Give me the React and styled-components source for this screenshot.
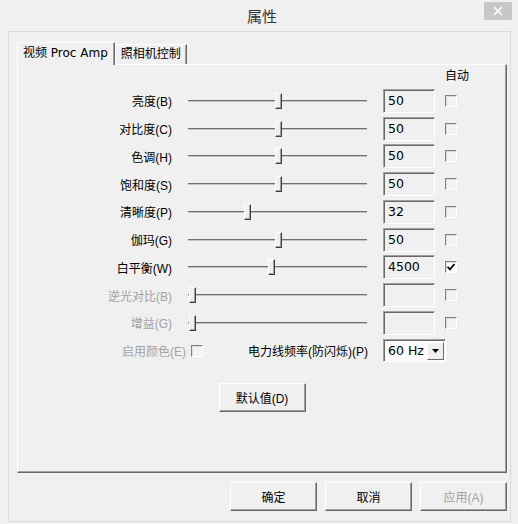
import React from "react";
import styled, { createGlobalStyle } from "styled-components";

const GlobalStyle = createGlobalStyle`
  body {
    margin: 0;
    background: #f0f0f0;
    font-family: "Liberation Sans", "Noto Sans CJK SC", sans-serif;
    font-size: 12px;
    color: #000;
  }
`;

const rows = [
  { label: "亮度(B)", value: "50", pos: 87 },
  { label: "对比度(C)", value: "50", pos: 87 },
  { label: "色调(H)", value: "50", pos: 87 },
  { label: "饱和度(S)", value: "50", pos: 87 },
  { label: "清晰度(P)", value: "32", pos: 56 },
  { label: "伽玛(G)", value: "50", pos: 87 },
  { label: "白平衡(W)", value: "4500", pos: 80, checked: true },
  { label: "逆光对比(B)", value: "", pos: 1, disabled: true },
  { label: "增益(G)", value: "", pos: 1, disabled: true },
];

function App() {
  return (
    <>
      <GlobalStyle />
      <Window>
        <TitleBar>
          <span />
          <Title>属性</Title>
          <CloseButton>
            <svg width="10" height="10" viewBox="0 0 10 10">
              <path d="M1 1 L9 9 M9 1 L1 9" stroke="#fff" strokeWidth="1.6" />
            </svg>
          </CloseButton>
        </TitleBar>
        <Client>
          <TabStrip>
            <Tab $active>视频 Proc Amp</Tab>
            <Tab>照相机控制</Tab>
          </TabStrip>
          <Panel>
            <Grid>
              <AutoHeader>自动</AutoHeader>
              {rows.map((r, i) => (
                <React.Fragment key={i}>
                  <Label $disabled={r.disabled}>{r.label}</Label>
                  <Track>
                    <Thumb style={{ left: r.pos }} />
                  </Track>
                  <TextBox>{r.value}</TextBox>
                  <CheckBox $checked={r.checked}>
                    {r.checked && (
                      <svg width="8" height="8" viewBox="0 0 8 8">
                        <path d="M0.5 3.8 L3 6.3 L7.5 1" stroke="#000" strokeWidth="1.8" fill="none" />
                      </svg>
                    )}
                  </CheckBox>
                </React.Fragment>
              ))}
              <LastRow>
                <InlineLabel>启用颜色(E)</InlineLabel>
                <CheckBox />
                <PowerLabel>电力线频率(防闪烁)(P)</PowerLabel>
              </LastRow>
              <Combo>
                <ComboText>60 Hz</ComboText>
                <ComboArrow>
                  <svg width="7" height="4" viewBox="0 0 7 4">
                    <path d="M0 0 L7 0 L3.5 4 Z" fill="#000" />
                  </svg>
                </ComboArrow>
              </Combo>
            </Grid>
            <CenterRow>
              <Button>默认值(D)</Button>
            </CenterRow>
          </Panel>
          <Footer>
            <Button>确定</Button>
            <Button>取消</Button>
            <Button $disabled>应用(A)</Button>
          </Footer>
        </Client>
      </Window>
    </>
  );
}

const Window = styled.div`
  width: 518px;
  height: 524px;
  display: flex;
  flex-direction: column;
  background: #f0f0f0;
  box-sizing: border-box;
`;

const TitleBar = styled.div`
  height: 31px;
  flex: none;
  display: grid;
  grid-template-columns: 1fr auto 1fr;
  align-items: center;
`;

const Title = styled.div`
  font-family: "Noto Sans CJK SC", sans-serif;
  font-size: 15px;
  color: #333;
  padding-left: 6px;
  margin-top: -1px;
`;

const CloseButton = styled.div`
  justify-self: end;
  align-self: start;
  margin: 2px 6px 0 0;
  width: 28px;
  height: 18px;
  background: #c7c7c7;
  display: flex;
  align-items: center;
  justify-content: center;
`;

const Client = styled.div`
  flex: 1;
  margin: 0 7px 2px 8px;
  border: 1px solid #dadada;
  padding: 10px 3px 0 8px;
  display: flex;
  flex-direction: column;
`;

const TabStrip = styled.div`
  display: flex;
  align-items: flex-end;
  height: 22px;
  flex: none;
`;

const Tab = styled.div`
  position: relative;
  z-index: 1;
  box-sizing: border-box;
  height: ${(p) => (p.$active ? "23px" : "20px")};
  margin-bottom: ${(p) => (p.$active ? "-1px" : "0")};
  padding: ${(p) => (p.$active ? "2px 6px 0 5px" : "1px 5px 0 5px")};
  background: #f0f0f0;
  border-top: 1px solid #fff;
  border-left: 1px solid #fff;
  border-right: 1px solid #696969;
  box-shadow: inset -1px 0 #a0a0a0;
  font-family: "DejaVu Sans", "Noto Sans CJK SC", sans-serif;
  font-size: 12px;
  line-height: 17px;
  white-space: nowrap;
`;

const Panel = styled.div`
  height: 409px;
  flex: none;
  box-sizing: border-box;
  border-top: 1px solid #fff;
  border-left: 1px solid #fff;
  border-right: 1px solid #696969;
  border-bottom: 1px solid #696969;
  box-shadow: inset -1px -1px #a0a0a0;
  display: flex;
  flex-direction: column;
`;

const Grid = styled.div`
  display: grid;
  grid-template-columns: 159px 195px 62px 12px;
  grid-template-rows: 18px;
  grid-auto-rows: 24px;
  row-gap: 3.75px;
  padding: 2px 0 0 11px;
  align-items: center;
  justify-items: start;
`;

const AutoHeader = styled.div`
  grid-column: 4;
  align-self: start;
  white-space: nowrap;
  line-height: 16px;
  font-family: "Noto Sans CJK SC", sans-serif;
  font-size: 12px;
`;

const Label = styled.div`
  justify-self: end;
  margin-right: 16px;
  white-space: nowrap;
  color: ${(p) => (p.$disabled ? "#a3a3a3" : "#000")};
`;

const InlineLabel = styled.div`
  margin-right: 5px;
  white-space: nowrap;
  color: #a3a3a3;
`;

const Track = styled.div`
  position: relative;
  width: 179px;
  height: 16px;
  &::before {
    content: "";
    position: absolute;
    left: 0;
    right: 0;
    top: 7px;
    height: 0;
    border-top: 1px solid #6f6f6f;
    border-bottom: 1px solid #c4c4c4;
  }
`;

const Thumb = styled.div`
  position: absolute;
  top: 0;
  width: 7px;
  height: 16px;
  box-sizing: border-box;
  background: #f0f0f0;
  border-top: 1px solid #fff;
  border-left: 1px solid #fff;
  border-right: 1px solid #404040;
  border-bottom: 1px solid #404040;
  box-shadow: inset -1px -1px #a0a0a0;
`;

const TextBox = styled.div`
  width: 52px;
  height: 24px;
  box-sizing: border-box;
  border-top: 1px solid #a0a0a0;
  border-left: 1px solid #a0a0a0;
  border-right: 1px solid #fff;
  border-bottom: 1px solid #fff;
  box-shadow: inset 1px 1px #696969;
  background: #f0f0f0;
  padding: 0 0 0 4px;
  line-height: 22px;
  font-family: "DejaVu Sans", "Liberation Sans", sans-serif;
  font-size: 12.5px;
`;

const CheckBox = styled.div`
  width: 12px;
  height: 12px;
  box-sizing: border-box;
  border-top: 1px solid #808080;
  border-left: 1px solid #808080;
  border-right: 1px solid #fff;
  border-bottom: 1px solid #fff;
  box-shadow: inset 1px 1px #dcdcdc;
  background: ${(p) => (p.$checked ? "#fff" : "#f3f3f3")};
  display: flex;
  align-items: center;
  justify-content: center;
`;

const LastRow = styled.div`
  grid-column: 1 / 3;
  justify-self: stretch;
  display: flex;
  align-items: center;
  padding: 0 15px 0 93px;
`;

const PowerLabel = styled.div`
  margin-left: auto;
  white-space: nowrap;
`;

const Combo = styled.div`
  grid-column: 3 / 5;
  width: 63px;
  height: 23px;
  box-sizing: border-box;
  border-top: 1px solid #a0a0a0;
  border-left: 1px solid #a0a0a0;
  border-right: 1px solid #fff;
  border-bottom: 1px solid #fff;
  box-shadow: inset 1px 1px #696969;
  background: #fafafa;
  display: flex;
  padding: 2px 1px 1px 2px;
`;

const ComboText = styled.div`
  flex: 1;
  padding-left: 2px;
  line-height: 17px;
  font-family: "DejaVu Sans", "Liberation Sans", sans-serif;
  font-size: 12.5px;
`;

const ComboArrow = styled.div`
  width: 17px;
  box-sizing: border-box;
  background: #f0f0f0;
  border-top: 1px solid #fff;
  border-left: 1px solid #fff;
  border-right: 1px solid #696969;
  border-bottom: 1px solid #696969;
  display: flex;
  align-items: center;
  justify-content: center;
`;

const CenterRow = styled.div`
  display: flex;
  justify-content: center;
  margin-top: 20px;
`;

const Button = styled.div`
  width: 87px;
  height: 29px;
  box-sizing: border-box;
  background: #f0f0f0;
  border-top: 1px solid #fff;
  border-left: 1px solid #fff;
  border-right: 1px solid #696969;
  border-bottom: 1px solid #696969;
  box-shadow: inset -1px -1px #a0a0a0;
  display: flex;
  align-items: center;
  justify-content: center;
  font-size: 12px;
  color: ${(p) => (p.$disabled ? "#a0a0a0" : "#000")};
`;

const Footer = styled.div`
  display: flex;
  justify-content: flex-end;
  gap: 8px;
  margin-top: 9px;
`;

export default App;
